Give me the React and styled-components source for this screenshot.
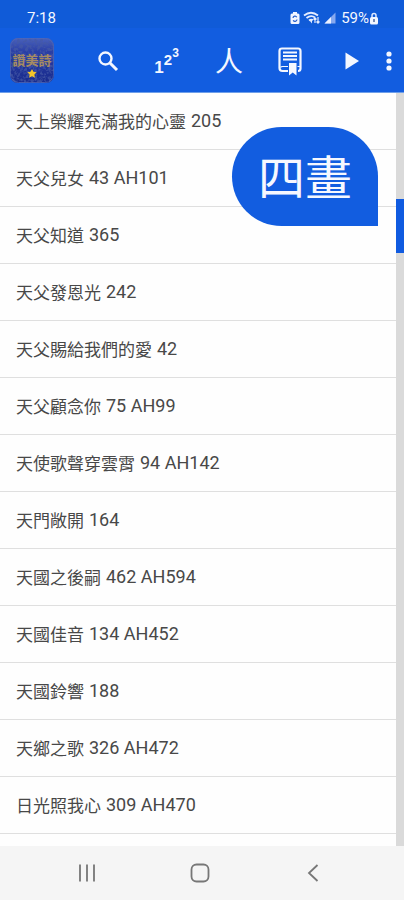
import React from "react";
import styled, { createGlobalStyle } from "styled-components";

const GlobalStyle = createGlobalStyle`
  *, *::before, *::after { box-sizing: border-box; }
  body {
    margin: 0;
    background: #fefefe;
    font-family: Roboto, "Noto Sans CJK TC", sans-serif;
  }
`;

const Screen = styled.div`
  display: flex;
  flex-direction: column;
  height: 100vh;
  overflow: hidden;
`;

const Header = styled.header`
  flex: none;
  background: #125de0;
  border-bottom: 1px solid #6f9fe9;
  color: #f4f7ff;
`;

const StatusBar = styled.div`
  display: flex;
  align-items: center;
  justify-content: space-between;
  height: 28px;
  padding: 8px 25px 0 27px;
  background: #105bd8;
  font-size: 15px;
  line-height: 20px;
`;

const Clock = styled.time`
  font-weight: 400;
`;

const StatusIcons = styled.div`
  display: flex;
  align-items: center;
  gap: 3px;
  svg { display: block; }
`;

const Battery = styled.span`
  display: flex;
  align-items: center;
  margin-left: 2px;
  font-size: 15px;
`;

const Toolbar = styled.div`
  display: flex;
  align-items: center;
  height: 64px;
  padding: 0 6px 0 9px;
`;

const Logo = styled.svg`
  flex: none;
  display: block;
  width: 46px;
  height: 46px;
`;

const Actions = styled.nav`
  display: flex;
  flex: 1;
  margin-left: 23px;
`;

const ToolButton = styled.button`
  display: flex;
  align-items: center;
  justify-content: center;
  flex: ${(p) => (p.$narrow ? "none" : "1")};
  width: ${(p) => (p.$narrow ? "18px" : "auto")};
  height: 48px;
  padding: 0;
  border: 0;
  background: none;
  color: inherit;
  font: 400 28px/48px "Noto Sans CJK TC", sans-serif;
  cursor: pointer;
  svg { display: block; flex: none; overflow: visible; }
`;

const StepDigits = styled.span`
  display: flex;
  align-items: flex-end;
  height: 32px;
  padding-right: 4px;
  font-family: "Liberation Sans", Arial, sans-serif;
  font-weight: 700;
`;

const StepDigit = styled.span`
  font-size: ${(p) => p.$size}px;
  line-height: ${(p) => p.$size}px;
  padding-bottom: ${(p) => p.$rise}px;
`;

const Content = styled.main`
  position: relative;
  display: flex;
  flex: 1;
  min-height: 0;
`;

const SongList = styled.ul`
  flex: 1;
  min-width: 0;
  margin: 0;
  padding: 0;
  overflow: hidden;
  list-style: none;
`;

const SongRow = styled.li`
  border-bottom: 1px solid #dfdfdf;
`;

const SongLink = styled.a`
  display: flex;
  align-items: center;
  gap: 5px;
  height: 56px;
  padding: 0 16px;
  color: #484848;
  text-decoration: none;
  white-space: nowrap;
`;

const SongTitle = styled.span`
  font: 400 17px/24px "Noto Sans CJK TC", sans-serif;
`;

const SongNumber = styled.span`
  font-size: 18px;
  line-height: 24px;
  font-weight: 400;
`;

const ScrollTrack = styled.div`
  flex: none;
  width: 8px;
  padding-top: 106px;
  background: #dadada;
`;

const ScrollThumb = styled.div`
  height: 54px;
  background: #105be0;
`;

const SectionBubble = styled.div`
  position: absolute;
  top: 34px;
  right: 26px;
  padding: 0 26px 4px;
  border-radius: 50px 50px 0 50px;
  background: #125de0;
  color: #f6f8ff;
  font: 400 47px/95px "Noto Sans CJK TC", sans-serif;
`;

const SystemNav = styled.nav`
  display: grid;
  grid-template-columns: repeat(3, 1fr);
  flex: none;
  height: 54px;
  padding: 0 34px 0 30px;
  background: #f5f5f5;
`;

const NavButton = styled.button`
  display: flex;
  align-items: center;
  justify-content: center;
  padding: 0;
  border: 0;
  background: none;
  color: #777;
  svg { display: block; }
`;

const songs = [
  ["天上榮耀充滿我的心靈", "205"],
  ["天父兒女", "43 AH101"],
  ["天父知道", "365"],
  ["天父發恩光", "242"],
  ["天父賜給我們的愛", "42"],
  ["天父顧念你", "75 AH99"],
  ["天使歌聲穿雲霄", "94 AH142"],
  ["天門敞開", "164"],
  ["天國之後嗣", "462 AH594"],
  ["天國佳音", "134 AH452"],
  ["天國鈴響", "188"],
  ["天鄉之歌", "326 AH472"],
  ["日光照我心", "309 AH470"],
];

function AppLogo() {
  return (
    <Logo viewBox="0 0 46 46" role="img" aria-label="讚美詩">
      <defs>
        <linearGradient id="logoBase" x1="0" y1="0" x2="0" y2="1">
          <stop offset="0" stopColor="#4a62bb" />
          <stop offset="0.3" stopColor="#2a3fa6" />
          <stop offset="1" stopColor="#182a8c" />
        </linearGradient>
        <filter id="logoGrain" x="0" y="0" width="100%" height="100%">
          <feTurbulence type="fractalNoise" baseFrequency="0.35" numOctaves="2" seed="4" />
          <feColorMatrix values="0 0 0 0 0.06  0 0 0 0 0.1  0 0 0 0 0.38  5 0 0 0 -2.2" />
          <feComposite in2="SourceGraphic" operator="in" />
        </filter>
      </defs>
      <rect x="1" y="1" width="44" height="45" rx="8" fill="url(#logoBase)" />
      <rect x="1" y="1" width="44" height="45" rx="8" filter="url(#logoGrain)" opacity="0.7" />
      <rect x="1.5" y="1.5" width="43" height="44" rx="8" fill="none" stroke="#5068b8" strokeOpacity="0.7" />
      <text x="23" y="28" textAnchor="middle" fontFamily='"Noto Sans CJK TC", sans-serif' fontWeight="700" fontSize="13" fill="#a58b62">
        讚美詩
      </text>
      <path d="M23 32l1.500 2.800 3.200.5-2.300 2.300.5 3.200-2.900-1.500-2.900 1.500.5-3.200-2.300-2.300 3.200-.5z" fill="#f3c52b" />
    </Logo>
  );
}

function StatusGlyphs() {
  return (
    <>
      <svg width="10" height="14" viewBox="0 0 10 14" aria-hidden="true">
        <path d="M3 1h4v1.500h1A1.500 1.500 0 0 1 9.500 4v7.500A1.500 1.500 0 0 1 8 13H2A1.500 1.500 0 0 1 .5 11.500V4A1.500 1.500 0 0 1 2 2.500h1z" fill="#f0f4ff" />
        <path d="M3 7a2 2 0 0 1 3.800-.7M7 8.500a2 2 0 0 1-3.800.7" fill="none" stroke="#2860cc" strokeWidth="1.200" />
      </svg>
      <svg width="18" height="14" viewBox="0 0 18 14" aria-hidden="true">
        <path d="M1 4.500Q8-1 15 4.500M3.500 7Q8 3.500 12 6.500M6 9.500Q8 8 10 9" fill="none" stroke="#e4ecff" strokeWidth="1.800" />
        <path d="M6.500 9.500L9 12.500V8.500z" fill="#e4ecff" />
        <path d="M12 12V7M10.500 8.500L12 6.800l1.500 1.700M15 6v6M13.500 10.500L15 12.200l1.500-1.700" fill="none" stroke="#e4ecff" strokeWidth="1.200" />
      </svg>
      <svg width="12" height="12" viewBox="0 0 12 12" aria-hidden="true">
        <path d="M11.500.5v11H.5z" fill="#86a9ef" />
        <path d="M7 5v6.500H.5z" fill="#eaf0ff" />
      </svg>
    </>
  );
}

function BatteryLock() {
  return (
    <svg width="10" height="14" viewBox="0 0 10 14" aria-hidden="true">
      <path d="M3 7V4.500a2 2 0 0 1 4 0V7" fill="none" stroke="#dce7ff" strokeWidth="1.500" />
      <rect x="1" y="6" width="8" height="7.500" rx="1.500" fill="#f2f6ff" />
      <path d="M5 8v3" stroke="#6b7fab" strokeWidth="1.800" />
    </svg>
  );
}

export default function App() {
  return (
    <>
      <GlobalStyle />
      <Screen>
        <Header>
          <StatusBar>
            <Clock>7:18</Clock>
            <StatusIcons>
              <StatusGlyphs />
              <Battery>
                59%
                <BatteryLock />
              </Battery>
            </StatusIcons>
          </StatusBar>
          <Toolbar>
            <AppLogo />
            <Actions aria-label="工具列">
              <ToolButton aria-label="搜尋">
                <svg width="22" height="22" viewBox="0 0 22 22" fill="none" stroke="currentColor">
                  <circle cx="8.500" cy="9.500" r="6" strokeWidth="2.400" />
                  <path d="M13 14l7 7" strokeWidth="3" />
                </svg>
              </ToolButton>
              <ToolButton aria-label="編號">
                <StepDigits>
                  <StepDigit $size={17} $rise={0}>1</StepDigit>
                  <StepDigit $size={15} $rise={9}>2</StepDigit>
                  <StepDigit $size={12} $rise={17}>3</StepDigit>
                </StepDigits>
              </ToolButton>
              <ToolButton aria-label="作者">人</ToolButton>
              <ToolButton aria-label="書籤">
                <svg width="24" height="30" viewBox="-1 -2 24 30" fill="none" stroke="currentColor">
                  <path d="M10 24H4.500Q1.500 24 1.500 21V4Q1.500 1.500 4 1.500H20Q22.500 1.500 22.500 4V21.500Q22.500 24 20 24" strokeWidth="2.200" />
                  <path d="M2.500 20.500Q3 19.500 4.500 19.500H10M19.500 19.500H22" strokeWidth="1.200" />
                  <path d="M5 5.500H19M5 9H19M5 12.500H19" strokeWidth="1.800" />
                  <path d="M11 16h7.500v12.500L14.750 25.500 11 28.500z" fill="currentColor" stroke="none" />
                </svg>
              </ToolButton>
              <ToolButton aria-label="播放">
                <svg width="14" height="18" viewBox="-2 -1 14 18" fill="currentColor">
                  <path d="M.5.5v17L14 9z" />
                </svg>
              </ToolButton>
            </Actions>
            <ToolButton $narrow aria-label="更多選項">
              <svg width="6" height="22" viewBox="0 0 6 22" fill="currentColor">
                <circle cx="3" cy="5" r="2.600" />
                <circle cx="3" cy="12" r="2.600" />
                <circle cx="3" cy="19" r="2.600" />
              </svg>
            </ToolButton>
          </Toolbar>
        </Header>
        <Content>
          <SongList>
            {songs.map(([title, number]) => (
              <SongRow key={title}>
                <SongLink href="#">
                  <SongTitle>{title}</SongTitle>
                  <SongNumber>{number}</SongNumber>
                </SongLink>
              </SongRow>
            ))}
          </SongList>
          <ScrollTrack>
            <ScrollThumb />
          </ScrollTrack>
          <SectionBubble>四畫</SectionBubble>
        </Content>
        <SystemNav aria-label="系統導覽">
          <NavButton aria-label="最近使用">
            <svg width="18" height="18" viewBox="0 0 18 18" stroke="currentColor" strokeWidth="1.800">
              <path d="M2 .5v17M9 .5v17M16 .5v17" />
            </svg>
          </NavButton>
          <NavButton aria-label="主畫面">
            <svg width="20" height="20" viewBox="0 0 20 20" fill="none" stroke="currentColor" strokeWidth="1.800">
              <rect x="1.500" y="1.500" width="17" height="17" rx="5" />
            </svg>
          </NavButton>
          <NavButton aria-label="返回">
            <svg width="12" height="18" viewBox="0 0 12 18" fill="none" stroke="currentColor" strokeWidth="1.800">
              <path d="M10.500 1L2 9l8.500 8" />
            </svg>
          </NavButton>
        </SystemNav>
      </Screen>
    </>
  );
}
